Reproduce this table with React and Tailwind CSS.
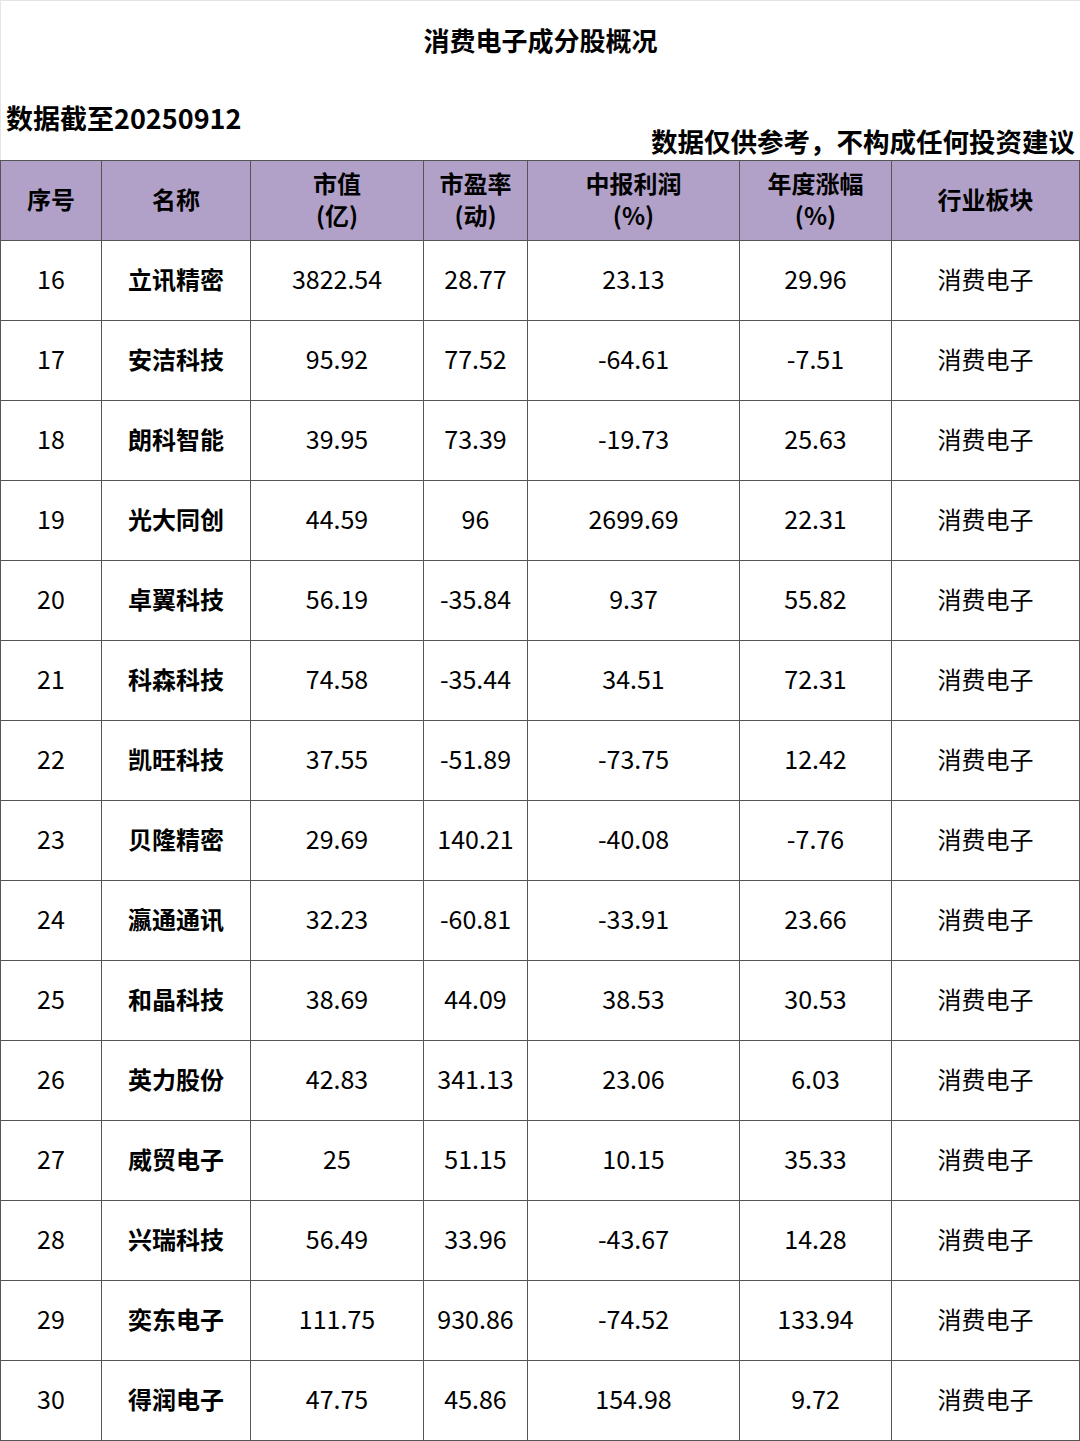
const rows = [
  ["16", "立讯精密", "3822.54", "28.77", "23.13", "29.96"],
  ["17", "安洁科技", "95.92", "77.52", "-64.61", "-7.51"],
  ["18", "朗科智能", "39.95", "73.39", "-19.73", "25.63"],
  ["19", "光大同创", "44.59", "96", "2699.69", "22.31"],
  ["20", "卓翼科技", "56.19", "-35.84", "9.37", "55.82"],
  ["21", "科森科技", "74.58", "-35.44", "34.51", "72.31"],
  ["22", "凯旺科技", "37.55", "-51.89", "-73.75", "12.42"],
  ["23", "贝隆精密", "29.69", "140.21", "-40.08", "-7.76"],
  ["24", "瀛通通讯", "32.23", "-60.81", "-33.91", "23.66"],
  ["25", "和晶科技", "38.69", "44.09", "38.53", "30.53"],
  ["26", "英力股份", "42.83", "341.13", "23.06", "6.03"],
  ["27", "威贸电子", "25", "51.15", "10.15", "35.33"],
  ["28", "兴瑞科技", "56.49", "33.96", "-43.67", "14.28"],
  ["29", "奕东电子", "111.75", "930.86", "-74.52", "133.94"],
  ["30", "得润电子", "47.75", "45.86", "154.98", "9.72"],
];

const cols = "grid grid-cols-[101px_149px_173px_104px_212px_152px_188px]";

export default function App() {
  return (
    <div
      className="w-[1080px] h-[1441px] bg-white text-black"
      style={{ fontFamily: '"Noto Sans CJK SC", "Noto Sans", sans-serif' }}
    >
      <div className="h-[160px] relative border-l border-t border-[#e4e4e4]">
        <div className="pt-[21px] text-center text-[26px] font-bold leading-[36px]">
          消费电子成分股概况
        </div>
        <div className="flex justify-between items-start mt-[42px] px-[5px]">
          <div className="text-[27px] font-bold leading-[34px] mt-[1px]">数据截至20250912</div>
          <div className="text-[26.5px] font-bold leading-[34px] mt-[24px]">
            数据仅供参考，不构成任何投资建议
          </div>
        </div>
      </div>

      <div className="border-t border-l border-[#555]">
        <div className={`${cols} h-[80px] bg-[#b1a1c9] font-bold text-[24px] leading-[32px]`}>
          {[
            ["序号"],
            ["名称"],
            ["市值", "(亿)"],
            ["市盈率", "(动)"],
            ["中报利润", "(%)"],
            ["年度涨幅", "(%)"],
            ["行业板块"],
          ].map((h, i) => (
            <div
              key={i}
              className="flex flex-col items-center justify-center pb-[3px] border-r border-b border-[#555]"
            >
              {h.map((t) => (
                <span key={t}>{t}</span>
              ))}
            </div>
          ))}
        </div>
        {rows.map((r) => (
          <div key={r[0]} className={`${cols} h-[80px]`}>
            {[...r, "消费电子"].map((v, i) => (
              <div
                key={i}
                className={`flex items-center justify-center pb-[3px] border-r border-b border-[#555] ${
                  i === 1 ? "font-bold text-[24px]" : i === 6 ? "text-[24px]" : "text-[25px]"
                }`}
              >
                {v}
              </div>
            ))}
          </div>
        ))}
      </div>
    </div>
  );
}
